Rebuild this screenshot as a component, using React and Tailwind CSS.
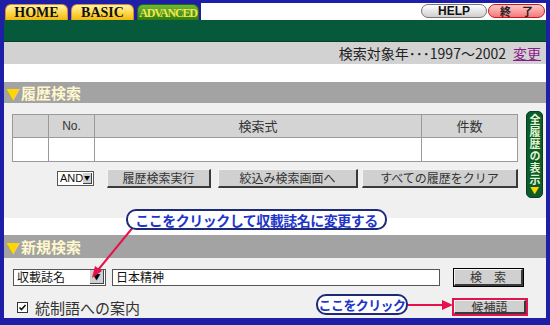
import React from "react";

const Tab = ({ label, active }) => (
  <div
    className={
      active
        ? "h-[16px] w-[62px] mr-[2px] rounded-t-[6px] border border-b-0 border-[#2a6a10] bg-gradient-to-b from-[#6cb83a] to-[#2f7c12] flex items-center justify-center"
        : "h-[16px] w-[63px] mr-[3px] rounded-t-[6px] border border-b-0 border-[#d9893a] bg-gradient-to-b from-[#fff3a8] via-[#ffd84a] to-[#f2b800] flex items-center justify-center"
    }
  >
    <span
      className={
        active
          ? "font-['Liberation_Serif',serif] font-bold text-[12px] tracking-[-1.2px] text-[#f3e64a] leading-none"
          : "font-['Liberation_Serif',serif] font-bold text-[14px] text-[#111] leading-none"
      }
    >
      {label}
    </span>
  </div>
);

const Btn = ({ label, className }) => (
  <div
    className={`h-[19px] bg-[#d0d0d0] border-t border-l border-t-[#f4f4f4] border-l-[#f4f4f4] border-r-2 border-b-2 border-r-[#3a3a3a] border-b-[#3a3a3a] flex items-center justify-center text-[12px] text-[#333] leading-none ${className}`}
  >
    {label}
  </div>
);

const Header = ({ label, className }) => (
  <div className={`bg-[#a3a3a3] flex items-center pl-[2px] ${className}`}>
    <span className="text-[#ffd600] text-[14px] leading-none mr-[1px]">▼</span>
    <span className="text-[#fff8cc] text-[15px] font-bold leading-none">{label}</span>
  </div>
);

export default function App() {
  return (
    <div className="relative w-[550px] h-[325px] bg-[#1e1ea6] pt-[3px] px-[4px] pb-[7px] overflow-hidden font-['Noto_Sans_CJK_JP',sans-serif]">
      <div className="flex flex-col h-full">
        {/* tabs */}
        <div className="h-[17px] flex items-end">
          <div className="flex items-end pl-[1px]">
            <Tab label="HOME" />
            <Tab label="BASIC" />
            <Tab label="ADVANCED" active />
          </div>
          <div className="flex-1 h-full bg-white flex items-start justify-end pr-[1px] pt-[1px] gap-[1px]">
            <div className="h-[14px] w-[66px] rounded-full border border-[#777] bg-gradient-to-b from-white to-[#cfcfcf] flex items-center justify-center font-['Liberation_Sans',sans-serif] font-bold text-[12px] text-[#111] leading-none">
              HELP
            </div>
            <div className="h-[14px] w-[57px] rounded-full border border-[#c81818] bg-gradient-to-b from-[#ffc8c8] to-[#f27a7a] flex items-center justify-center font-bold text-[11px] text-[#222] leading-none">
              終　了
            </div>
          </div>
        </div>

        <div className="h-[22px] bg-[#06593b] border-b border-[#034028]" />

        <div className="h-[22px] bg-[#d2d2d2] flex items-center justify-end pr-[2px] text-[14px] leading-none">
          <span className="text-[#222]">検索対象年･･･1997～2002</span>
          <span className="ml-[7px] mr-[3px] text-[#8a1a8a] underline">変更</span>
        </div>

        <div className="h-[18px] bg-white" />

        <Header label="履歴検索" className="h-[21px]" />

        <div className="h-[115px] bg-[#f0f0f0] flex items-start">
          <div className="ml-[8px] mt-[11px] w-[506px]">
            <table className="w-full border-collapse text-[13px] text-[#333]">
              <tbody>
                <tr className="h-[23px] bg-[#d4d4d4]">
                  <td className="w-[36px] border border-[#9a9a9a]"></td>
                  <td className="w-[46px] border border-[#9a9a9a] text-center font-['Liberation_Sans',sans-serif] text-[12px]">No.</td>
                  <td className="border border-[#9a9a9a] text-center">検索式</td>
                  <td className="w-[96px] border border-[#9a9a9a] text-center">件数</td>
                </tr>
                <tr className="h-[24px] bg-white">
                  <td className="border border-[#9a9a9a]"></td>
                  <td className="border border-[#9a9a9a]"></td>
                  <td className="border border-[#9a9a9a]"></td>
                  <td className="border border-[#9a9a9a]"></td>
                </tr>
              </tbody>
            </table>
            <div className="mt-[7px] flex items-center">
              <div className="ml-[45px] w-[37px] h-[15px] bg-white border border-[#555] flex items-center justify-between pl-[2px]">
                <span className="font-['Liberation_Sans',sans-serif] text-[11px] leading-none text-[#111]">AND</span>
                <div className="w-[11px] h-[11px] mr-[1px] bg-[#d0d0d0] border-r border-b border-[#444] flex items-center justify-center text-[6px] leading-none">▼</div>
              </div>
              <Btn label="履歴検索実行" className="ml-[13px] w-[104px]" />
              <Btn label="絞込み検索画面へ" className="ml-[7px] w-[140px]" />
              <Btn label="すべての履歴をクリア" className="ml-[4px] w-[156px]" />
            </div>
          </div>
          <div className="ml-[8px] mt-[8px] w-[17px] h-[87px] rounded-[5px] bg-[#0b5b2c] border border-[#06401c] flex flex-col items-center pt-[2px]">
            <span className="[writing-mode:vertical-rl] text-[#e4f6cc] font-bold text-[11px] leading-[15px] tracking-[1px]">
              全履歴の表示
            </span>
            <span className="text-[#ffd600] text-[9px] leading-[10px]">▼</span>
          </div>
        </div>

        <div className="h-[17px] bg-white" />

        <Header label="新規検索" className="h-[23px]" />

        <div className="flex-1 bg-[#f0f0f0] pt-[10px]">
          <div className="flex items-center h-[18px]">
            <div className="ml-[9px] w-[93px] h-[17px] bg-white border border-[#555] flex items-center justify-between pl-[3px]">
              <span className="text-[12px] leading-none text-[#111]">収載誌名</span>
              <div className="w-[14px] h-[14px] mr-[1px] bg-[#d0d0d0] border-r border-b border-[#444] flex items-center justify-center text-[8px] leading-none">▼</div>
            </div>
            <div className="ml-[6px] w-[328px] h-[17px] bg-white border border-[#555] flex items-center pl-[3px] text-[12px] leading-none text-[#111]">
              日本精神
            </div>
            <div className="ml-[13px] w-[71px] h-[19px] border border-black flex">
              <Btn label="検　索" className="flex-1 h-full" />
            </div>
          </div>
          <div className="flex items-center h-[18px] mt-[12px]">
            <div className="ml-[13px] w-[11px] h-[11px] bg-white border border-[#333] flex items-center justify-center">
              <svg width="9" height="9" viewBox="0 0 9 9">
                <path d="M1.5 4.5 L3.5 6.5 L7.5 2" stroke="#111" strokeWidth="1.6" fill="none" />
              </svg>
            </div>
            <span className="ml-[7px] text-[15px] leading-none text-[#333]">統制語への案内</span>
            <div className="ml-auto mr-[18px] w-[76px] h-[18px] border-2 border-[#e0144e] flex">
              <Btn label="候補語" className="flex-1 h-full" />
            </div>
          </div>
        </div>
      </div>

      {/* annotations */}
      <svg className="absolute inset-0 pointer-events-none" width="550" height="325">
        <line x1="134" y1="226" x2="98" y2="270" stroke="#e8104a" strokeWidth="2" />
        <polygon points="92,278 95,266 102,271" fill="#e8104a" />
        <line x1="406" y1="305" x2="444" y2="305" stroke="#e8104a" strokeWidth="2" />
        <polygon points="453,305 442,300 442,310" fill="#e8104a" />
      </svg>
      <div className="absolute left-[126px] top-[209px] w-[261px] h-[21px] rounded-[10px] border-2 border-[#1c2a78] bg-white flex items-center justify-center">
        <span className="text-[#1d35c8] font-bold text-[14px] tracking-[-0.5px] leading-none whitespace-nowrap">
          ここをクリックして収載誌名に変更する
        </span>
      </div>
      <div className="absolute left-[316px] top-[294px] w-[92px] h-[21px] rounded-[10px] border-2 border-[#1c2a78] bg-white flex items-center justify-center">
        <span className="text-[#1d35c8] font-bold text-[13px] tracking-[-0.6px] leading-none whitespace-nowrap">
          ここをクリック
        </span>
      </div>
    </div>
  );
}
